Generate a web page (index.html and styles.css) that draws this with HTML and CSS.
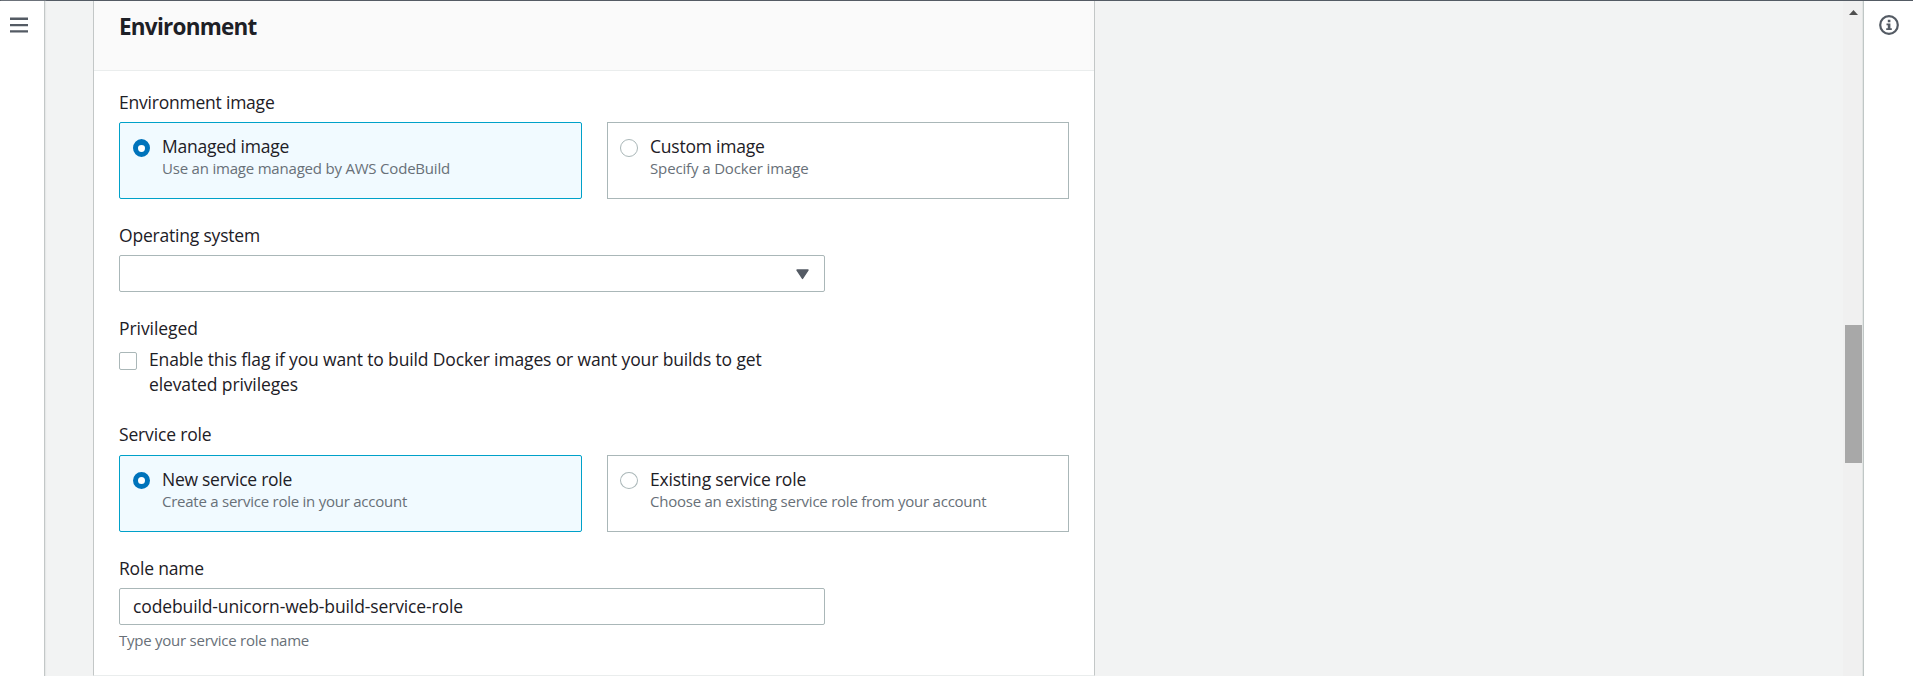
FILE: index.html
```
<!DOCTYPE html>
<html lang="en">
<head>
<meta charset="utf-8">
<title>Create build project</title>
<link rel="stylesheet" href="styles.css">
</head>
<body>
<div class="topline"></div>
<div class="shell">
  <nav class="rail rail-left">
    <svg class="menu-icon" width="18" height="17" viewBox="0 0 18 17"><path d="M0 1.8h18M0 8.1h18M0 14.4h18" stroke="#545b64" stroke-width="2.4"/></svg>
  </nav>
  <main class="content">
    <section class="panel">
      <header class="panel-header"><h2 class="title">Environment</h2></header>
      <div class="panel-body">
        <div class="field image-field">
          <div class="label ls-environment">Environment image</div>
          <div class="tiles">
            <label class="tile selected">
              <span class="radio on"></span>
              <span class="tile-text"><span class="tile-title ls-managed">Managed image</span><span class="tile-desc ls-use">Use an image managed by AWS CodeBuild</span></span>
            </label>
            <label class="tile">
              <span class="radio"></span>
              <span class="tile-text"><span class="tile-title ls-custom">Custom image</span><span class="tile-desc ls-specify">Specify a Docker image</span></span>
            </label>
          </div>
        </div>
        <div class="field os-field">
          <div class="label ls-os">Operating system</div>
          <div class="select"><svg width="13" height="11" viewBox="0 0 13 11"><path d="M1 1h11L6.5 9.4z" fill="#545b64" stroke="#545b64" stroke-width="1.4" stroke-linejoin="round"/></svg></div>
        </div>
        <div class="field privileged-field">
          <div class="label ls-privileged">Privileged</div>
          <label class="check">
            <span class="checkbox"></span>
            <span class="check-text"><span class="ls-enable">Enable this flag if you want to build Docker images or want your builds to get</span><br>elevated privileges</span>
          </label>
        </div>
        <div class="field role-field">
          <div class="label ls-service">Service role</div>
          <div class="tiles">
            <label class="tile selected">
              <span class="radio on"></span>
              <span class="tile-text"><span class="tile-title ls-new">New service role</span><span class="tile-desc ls-create">Create a service role in your account</span></span>
            </label>
            <label class="tile">
              <span class="radio"></span>
              <span class="tile-text"><span class="tile-title ls-existing">Existing service role</span><span class="tile-desc ls-choose">Choose an existing service role from your account</span></span>
            </label>
          </div>
        </div>
        <div class="field name-field">
          <div class="label ls-role">Role name</div>
          <div class="input">codebuild-unicorn-web-build-service-role</div>
          <div class="hint">Type your service role name</div>
        </div>
      </div>
    </section>
  </main>
  <div class="scrollbar">
    <svg class="arrow" width="9" height="5" viewBox="0 0 9 5"><path d="M0 5h9L4.5 0z" fill="#505050"/></svg>
    <div class="thumb"></div>
  </div>
  <aside class="rail rail-right">
    <svg width="20" height="20" viewBox="0 0 20 20"><circle cx="10" cy="10" r="8.8" fill="none" stroke="#545b64" stroke-width="2.2"/><path d="M8.8 4.8h2.6v2.4H8.8zM7.5 8.5h3.9v4.7h1.4V15H7.2v-1.8h1.6v-3H7.5z" fill="#545b64"/></svg>
  </aside>
</div>
</body>
</html>
```
FILE: styles.css
```
* { box-sizing: border-box; }
body {
  margin: 0;
  height: 676px;
  overflow: hidden;
  display: flex;
  flex-direction: column;
  background: #f2f3f3;
  color: #1d2026;
  font: 17.5px/25px "Open Sans", "Noto Sans", sans-serif;
}
.topline { height: 1px; flex: none; background: #545b64; }
.shell { flex: 1; display: flex; min-height: 0; }
.rail { flex: none; background: #fff; }
.rail-left { width: 45px; padding: 16px 0 0 10px; border-right: 1px solid #c3c7c7; box-shadow: 1px 0 1px #e6e8e8; }
.rail-right { width: 50px; padding: 14px 0 0 15px; border-left: 1px solid #c0c7c6; box-shadow: -1px 0 0 #e2e5e4; z-index: 1; }
.rail svg { display: block; }
.content { flex: 1; padding-left: 48px; }
.panel { width: 1002px; height: 675px; background: #fff; border: 1px solid #c3c7c7; border-top: 0; border-bottom-color: #eaeded; }
.panel-header { height: 70px; padding: 11px 25px 0; background: #fafafa; border-bottom: 1px solid #eaeded; }
.title { margin: 0; font-size: 22.5px; line-height: 30px; font-weight: 700; letter-spacing: -.76px; }
.panel-body { padding: 19px 25px 0; }
.label { height: 25px; margin-bottom: 7px; white-space: nowrap; }
.image-field, .os-field, .role-field { margin-bottom: 24px; }
.privileged-field { margin-bottom: 25px; }
.privileged-field .label { margin-bottom: 6px; }
.role-field .label { margin-bottom: 8px; }
.tiles { display: grid; grid-template-columns: 463px 462px; gap: 25px; }
.tile { height: 77px; padding: 11px 13px; border: 1px solid #aab7b8; display: flex; gap: 12px; }
.tile.selected { border-color: #00a1c9; border-radius: 2px; background: #f1faff; }
.radio { flex: none; width: 18px; height: 18px; margin-top: 5px; border: 1px solid #aab7b8; border-radius: 50%; background: #fff; }
.role-field .radio { height: 17px; }
.tile:not(.selected) { padding-left: 12px; }
.radio.on { width: 17px; border: 5px solid #0073bb; }
.image-field .radio.on { border-top-width: 6px; }
.tile-text { display: flex; flex-direction: column; white-space: nowrap; }
.tile-desc, .hint { font-size: 15px; line-height: 20px; color: #687078; }
.tile-desc { margin-top: -1px; }
.select, .input { width: 706px; height: 37px; border: 1px solid #aab7b8; border-radius: 2px; display: flex; align-items: center; }
.select { justify-content: flex-end; padding: 1px 15px 0 0; }
.input { padding-left: 13px; letter-spacing: -.124px; }
.check { display: flex; gap: 12px; }
.checkbox { flex: none; width: 18px; height: 18px; margin-top: 5px; border: 1px solid #aab7b8; border-radius: 2px; background: #fff; }
.check-text { white-space: nowrap; letter-spacing: -.116px; }
.hint { margin-top: 5px; letter-spacing: -.245px; }
.scrollbar { flex: none; width: 20px; padding: 9px 1px 0 2px; background: #f0f0f0; display: flex; flex-direction: column; }
.arrow { display: block; margin-left: 4px; }
.thumb { width: 17px; height: 138px; margin-top: 310px; background: #a8a8a8; }
.ls-environment { letter-spacing: -.22px; }
.ls-managed { letter-spacing: -.244px; }
.ls-use { letter-spacing: -.202px; }
.ls-custom { letter-spacing: -.232px; }
.ls-specify { letter-spacing: -.136px; }
.ls-os { letter-spacing: -.198px; }
.ls-privileged { letter-spacing: -.054px; }
.ls-enable { letter-spacing: -.14px; }
.ls-service { letter-spacing: -.159px; }
.ls-new { letter-spacing: -.267px; }
.ls-create { letter-spacing: -.246px; }
.ls-existing { letter-spacing: -.2px; }
.ls-choose { letter-spacing: -.24px; }
.ls-role { letter-spacing: -.178px; }
```
